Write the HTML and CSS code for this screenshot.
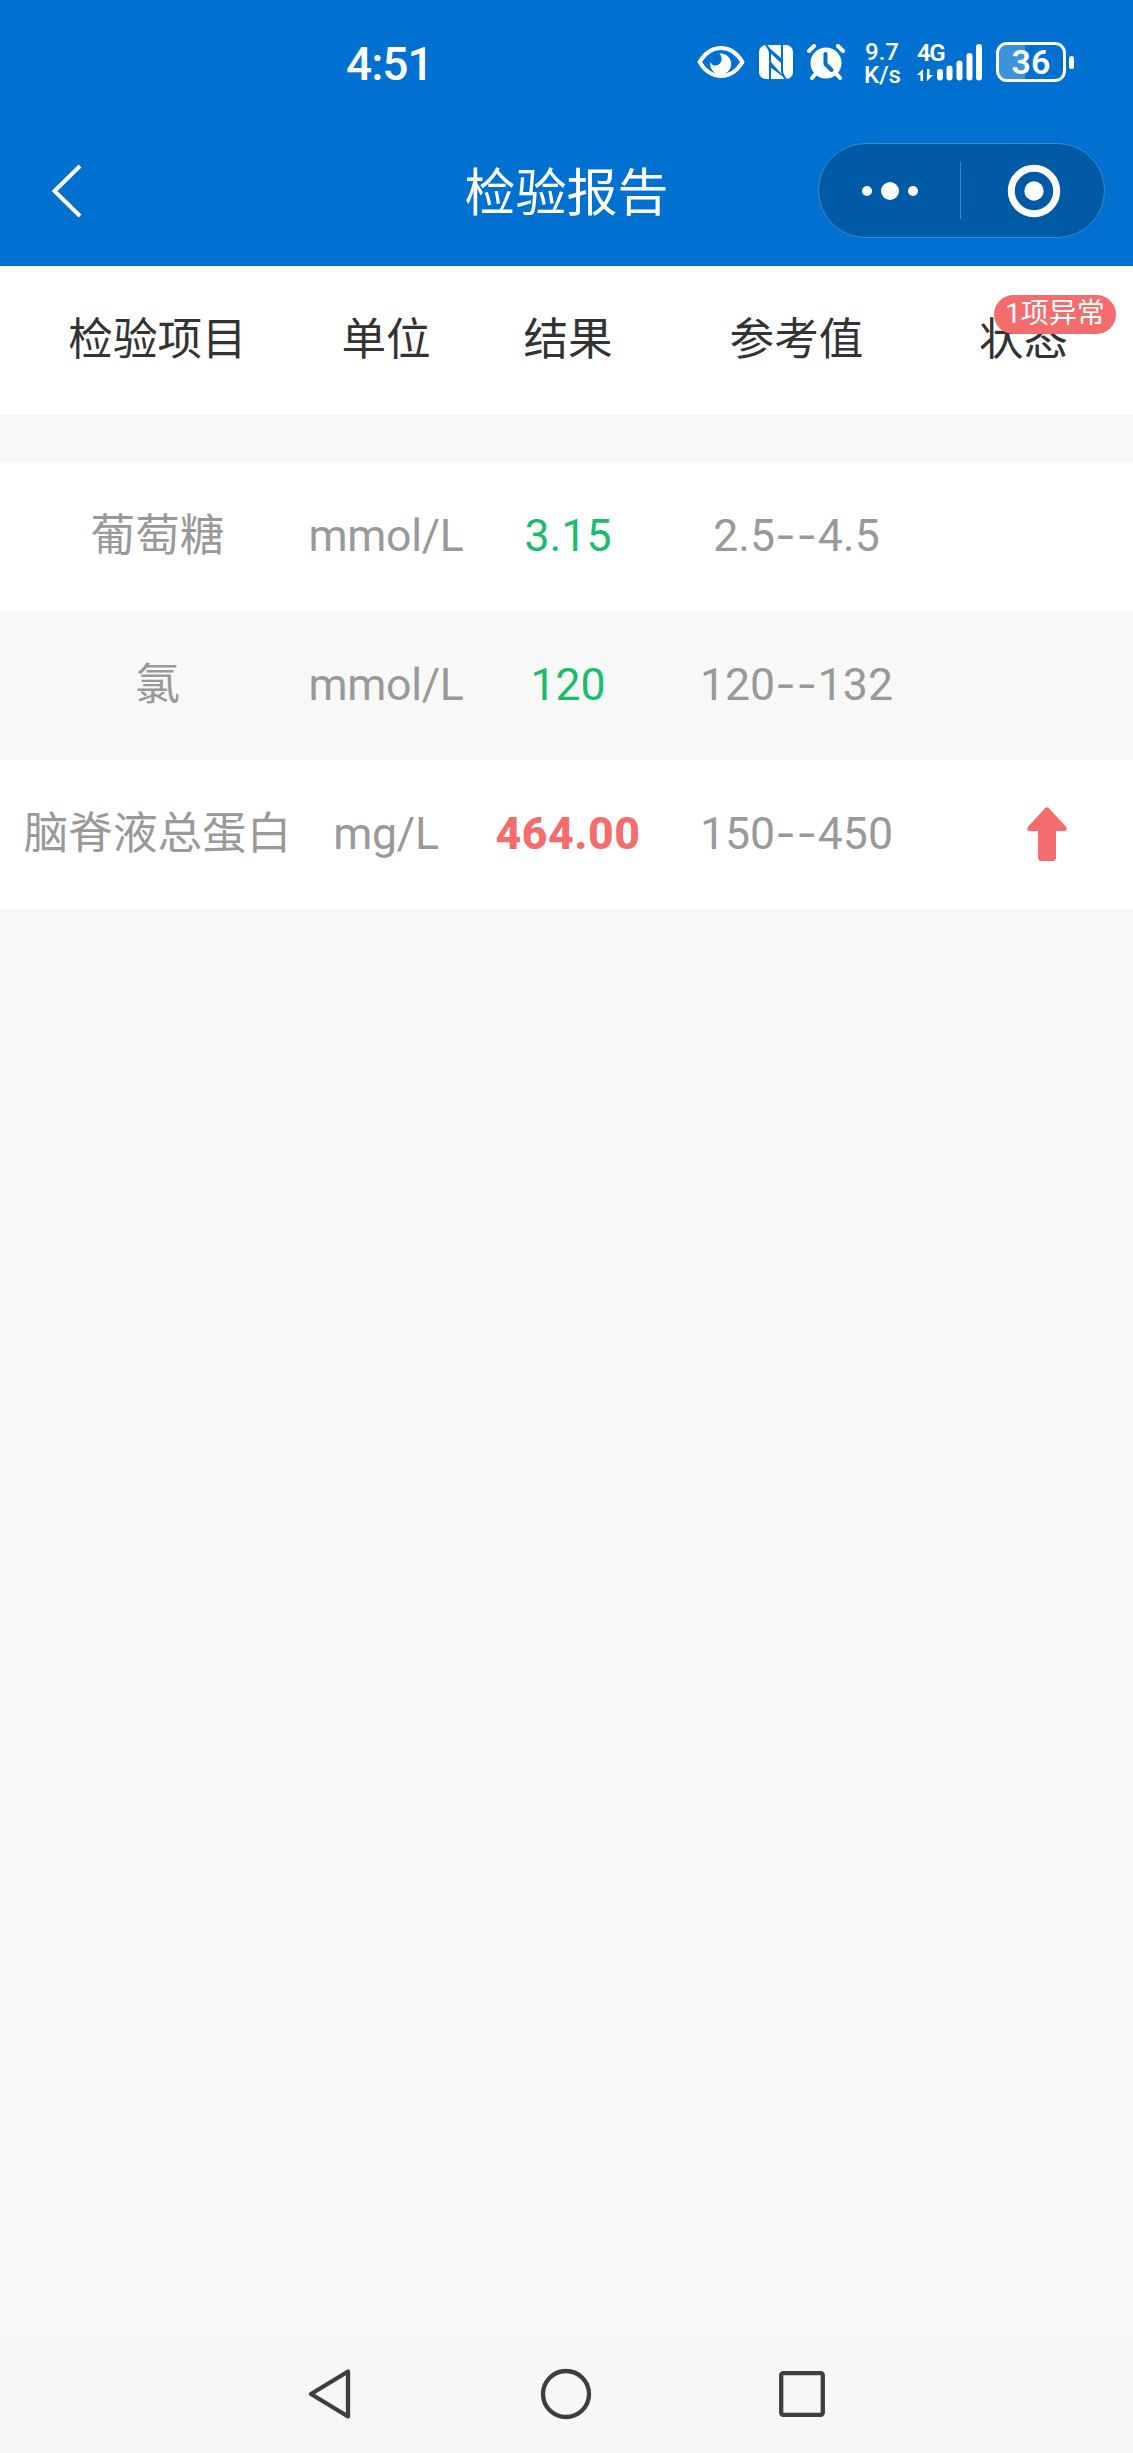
FILE: index.html
```html
<!DOCTYPE html>
<html lang="zh-CN">
<head>
  <meta charset="UTF-8">
  <title>检验报告</title>
  <link rel="stylesheet" href="styles.css">
</head>
<body>
  <div class="page">
    <header class="header">
      <div class="status-bar">
        <div class="time">4:51</div>
        <div class="status-icons">
          <svg class="icon-eye" width="48" height="34" viewBox="0 0 48 34">
            <path d="M2.500 17C8 8 15.500 3 24 3s16 5 21.500 14C40 26 32.500 31 24 31S8 26 2.500 17z" fill="none" stroke="#fff" stroke-width="4" stroke-linejoin="round"/>
            <path d="M24 8.500a10.500 10.500 0 1 1-10.600 8.500c1.500 3.500 5 4.500 8 2.800 3.800-2.200 4.500-7 1-11.200z" fill="#fff"/>
          </svg>
          <svg class="icon-nfc" width="34" height="34" viewBox="0 0 34 34">
            <rect width="34" height="34" rx="7" fill="#fff"/>
            <path d="M11 34V9Q11 4 7 0M23 0v25q0 5 4 9" fill="none" stroke="#0071d0" stroke-width="2"/>
            <path d="M7 0l16 14v5L10.500 7zM11 16l16 18L11 22z" fill="#0071d0"/>
          </svg>
          <svg class="icon-alarm" width="38" height="37" viewBox="0 0 38 37">
            <circle cx="19" cy="19" r="15.500" fill="#fff"/>
            <path d="M2 7l5-5M36 7l-5-5M8.500 30L5 34M29.500 30l3.500 4" stroke="#fff" stroke-width="4" stroke-linecap="round"/>
            <path d="M18.500 10v10l6 6" fill="none" stroke="#0071d0" stroke-width="4" stroke-linecap="round" stroke-linejoin="round"/>
          </svg>
          <div class="speed"><span>9.7</span><span>K/s</span></div>
          <div class="signal">
            <div class="network">
              <span>4G</span>
              <svg width="16" height="12" viewBox="0 0 16 12">
                <path d="M0 6l6-6v12H3.500V6zM16 6l-6 6V0h2.500v6z" fill="#fff"/>
              </svg>
            </div>
            <svg width="45" height="37" viewBox="0 0 45 37">
              <path d="M3 28v5.500M12.500 24.500v9M22.500 19.500v14M32.500 12v21.500M42 3v30.500" stroke="#fff" stroke-width="6" stroke-linecap="round"/>
            </svg>
          </div>
          <div class="battery"><span>36</span></div>
          <div class="battery-cap"></div>
        </div>
      </div>

      <div class="title-bar">
        <svg class="back" width="32" height="54" viewBox="0 0 32 54">
          <path d="M29 2L3.500 27 29 52" fill="none" stroke="#fff" stroke-width="4"/>
        </svg>
        <h1>检验报告</h1>
        <div class="capsule">
          <div class="menu">
            <svg width="58" height="20" viewBox="0 0 58 20">
              <g fill="#fff">
                <circle cx="6" cy="10" r="5"/>
                <circle cx="29" cy="10" r="9"/>
                <circle cx="52" cy="10" r="5"/>
              </g>
            </svg>
          </div>
          <div class="divider"></div>
          <div class="close">
            <svg width="54" height="54" viewBox="0 0 54 54">
              <circle cx="27" cy="27" r="22.700" fill="none" stroke="#fff" stroke-width="7"/>
              <circle cx="27" cy="27" r="9.700" fill="#fff"/>
            </svg>
          </div>
        </div>
      </div>
    </header>

    <main>
      <div class="row row-head">
        <div>检验项目</div>
        <div>单位</div>
        <div>结果</div>
        <div>参考值</div>
        <div class="status">状态<span class="badge">1项异常</span></div>
      </div>

      <div class="row">
        <div>葡萄糖</div>
        <div class="unit">mmol/L</div>
        <div class="normal">3.15</div>
        <div>2.5<span class="dash">--</span>4.5</div>
        <div></div>
      </div>
      <div class="row row-even">
        <div>氯</div>
        <div class="unit">mmol/L</div>
        <div class="normal">120</div>
        <div>120<span class="dash">--</span>132</div>
        <div></div>
      </div>
      <div class="row">
        <div>脑脊液总蛋白</div>
        <div class="unit">mg/L</div>
        <div class="abnormal">464.00</div>
        <div>150<span class="dash">--</span>450</div>
        <div class="arrow">
          <svg width="40" height="54" viewBox="0 0 40 54">
            <path d="M18 1.200q2-1.800 4 0l17 18.500q2.200 4.300-2 4.300h-8v26.500q0 3.500-3.500 3.500h-11Q11 54 11 50.500V24H3q-4.200 0-2-4.300z" fill="#f56c6c"/>
          </svg>
        </div>
      </div>
    </main>

    <nav class="nav-bar">
      <svg width="46" height="54" viewBox="0 0 46 54">
        <path d="M41 4.500v45L4 27z" fill="none" stroke="#3e3e3e" stroke-width="4.300" stroke-linejoin="round"/>
      </svg>
      <svg width="52" height="52" viewBox="0 0 52 52">
        <circle cx="26" cy="26" r="23" fill="none" stroke="#3e3e3e" stroke-width="4.300"/>
      </svg>
      <svg width="46" height="46" viewBox="0 0 46 46">
        <rect x="2.200" y="2.200" width="41.600" height="41.600" rx="2" fill="none" stroke="#3e3e3e" stroke-width="4.300"/>
      </svg>
    </nav>
  </div>
</body>
</html>
```

FILE: styles.css
```css
* {
  box-sizing: border-box;
}

body {
  margin: 0;
  background: #f8f8f8;
  font-family: Roboto, "Noto Sans CJK SC", sans-serif;
}

svg {
  display: block;
  flex-shrink: 0;
}

.page {
  display: flex;
  flex-direction: column;
  height: 2453px;
}

/* header */
.header {
  height: 266px;
  background: #0071d0;
  color: #fff;
}

.status-bar {
  display: flex;
  justify-content: space-between;
  height: 124px;
  padding: 0 59px 0 346px;
}

.time {
  height: 124px;
  line-height: 128px;
  font-size: 46px;
  font-weight: 500;
  letter-spacing: -1px;
}

.status-icons {
  display: flex;
  align-items: center;
}

.icon-nfc {
  margin-left: 14px;
}

.icon-alarm {
  margin-left: 14px;
}

.speed {
  display: flex;
  flex-direction: column;
  width: 36px;
  margin: 3px 2px 0 19px;
  font-size: 24px;
  font-weight: 500;
  line-height: 23px;
  text-align: center;
}

.signal {
  display: flex;
  align-items: center;
  margin-left: 15px;
}

.network {
  width: 20px;
  height: 37px;
  font-size: 24px;
  font-weight: 600;
  line-height: 18px;
  letter-spacing: -1.5px;
}

.network span {
  display: block;
  height: 25px;
}

.battery {
  width: 70px;
  height: 40px;
  margin-left: 14px;
  border: 3px solid #fff;
  border-radius: 11px;
  background: linear-gradient(to right, #3d92dc 26px, transparent 26px);
  font-size: 34px;
  font-weight: 600;
  line-height: 35px;
  text-align: center;
}

.battery-cap {
  width: 5px;
  height: 13px;
  margin-left: 3px;
  border-radius: 3px;
  background: #fff;
}

.title-bar {
  display: grid;
  grid-template-columns: 287px 1fr 287px;
  align-items: center;
  height: 134px;
  padding: 0 28px;
}

.back {
  margin-left: 23px;
}

.title-bar h1 {
  margin: 5px 0 0;
  font-size: 51px;
  font-weight: 400;
  line-height: 60px;
  text-align: center;
}

.capsule {
  display: flex;
  align-items: center;
  height: 95px;
  margin-bottom: 1px;
  border: 1px solid #4089c8;
  border-radius: 48px;
  background: #005aa6;
}

.menu,
.close {
  flex: 1;
  display: flex;
  justify-content: center;
}

.menu {
  padding-left: 1px;
}

.close {
  padding-left: 3px;
}

.divider {
  width: 1px;
  height: 57px;
  background: #4089c8;
}

/* results */
main {
  flex: 1;
}

.row {
  display: grid;
  grid-template-columns: 315px 142px 222px 235px 219px;
  align-items: center;
  height: 149px;
  padding-bottom: 2px;
  background: #fff;
  color: #999;
  font-size: 44.6px;
  line-height: 60px;
  text-align: center;
}

.row > div {
  white-space: nowrap;
}

.row-head {
  margin-bottom: 47px;
  color: #333;
}

.row-even {
  background: #f8f8f8;
}

.row > .unit {
  margin: 0 -12px;
  letter-spacing: -0.3px;
}

.normal {
  color: #19be6b;
}

.abnormal {
  color: #f56c6c;
  font-weight: 800;
  letter-spacing: 0.5px;
}

.dash {
  font-family: Inter, sans-serif;
  letter-spacing: 0.8px;
}

.status {
  position: relative;
}

.badge {
  position: absolute;
  top: -15px;
  right: 17px;
  width: 122px;
  height: 39px;
  border-radius: 20px;
  background: #f56c6c;
  color: #fff;
  font-size: 28px;
  line-height: 37px;
}

.arrow svg {
  margin: 1px 0 0 113px;
}

/* system navigation */
.nav-bar {
  display: flex;
  align-items: center;
  justify-content: space-between;
  height: 119px;
  padding: 0 308px 0 307px;
  background: #f7f7f7;
}
```
